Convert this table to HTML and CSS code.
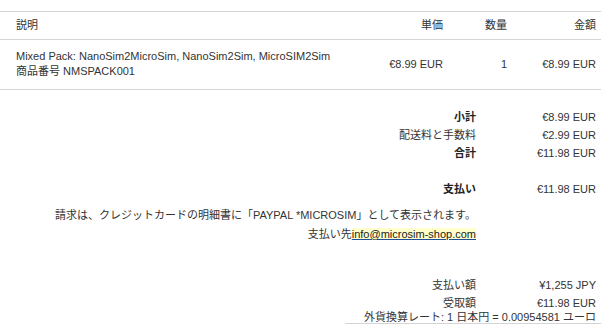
FILE: index.html
```html
<!DOCTYPE html>
<html lang="ja">
<head>
<meta charset="utf-8">
<link rel="stylesheet" href="styles.css">
</head>
<body>
<div class="invoice">
  <div class="items">
    <div class="row head">
      <div class="desc">説明</div>
      <div class="num">単価</div>
      <div class="num">数量</div>
      <div class="num amt">金額</div>
    </div>
    <div class="row item">
      <div class="desc">Mixed Pack: NanoSim2MicroSim, NanoSim2Sim, MicroSIM2Sim<br>商品番号 NMSPACK001</div>
      <div class="num">€8.99 EUR</div>
      <div class="num">1</div>
      <div class="num amt">€8.99 EUR</div>
    </div>
  </div>

  <div class="totals">
    <div class="lbl strong">小計</div><div class="val">€8.99 EUR</div>
    <div class="lbl">配送料と手数料</div><div class="val">€2.99 EUR</div>
    <div class="lbl strong">合計</div><div class="val">€11.98 EUR</div>
    <div class="lbl strong paid">支払い</div><div class="val paid">€11.98 EUR</div>
  </div>

  <div class="note">
    <div>請求は、クレジットカードの明細書に「PAYPAL *MICROSIM」として表示されます。</div>
    <div>支払い先<a class="mail" href="#">info@microsim-shop.com</a></div>
  </div>

  <div class="conv">
    <div class="lbl">支払い額</div><div class="val">¥1,255 JPY</div>
    <div class="lbl">受取額</div><div class="val">€11.98 EUR</div>
    <div class="rate">外貨換算レート: 1 日本円 = 0.00954581 ユーロ</div>
  </div>
</div>
</body>
</html>
```

FILE: styles.css
```css
html, body {
  margin: 0;
  padding: 0;
  background: #ffffff;
}

body {
  font-family: "Liberation Sans", Arial, "Noto Sans CJK JP", sans-serif;
  font-size: 11px;
  color: #333333;
}

.invoice {
  width: 601px;
  padding-top: 11px;
}

.items .row {
  display: grid;
  grid-template-columns: 1fr 90px 64px 94px;
  border-top: 1px solid #d4d4d4;
}

.items .row:last-child {
  border-bottom: 1px solid #d4d4d4;
}

.head {
  line-height: 27px;
}

.item {
  line-height: 15px;
  padding: 9px 0 10px;
  align-items: center;
}

.desc {
  padding-left: 16px;
}

.num {
  text-align: right;
}

.amt {
  padding-right: 5px;
}

.totals {
  display: grid;
  grid-template-columns: 1fr 120px;
  line-height: 18px;
  margin-top: 18px;
  padding-right: 5px;
}

.lbl {
  text-align: right;
  white-space: nowrap;
}

.val {
  text-align: right;
  white-space: nowrap;
}

.strong {
  font-weight: bold;
  color: #222222;
}

.paid {
  margin-top: 18px;
}

.note {
  width: 476px;
  text-align: right;
  line-height: 19px;
  margin-top: 8px;
  white-space: nowrap;
}

.mail {
  color: #1a1a1a;
  background: #ffffcc;
  text-decoration: underline;
  text-decoration-color: #1f4f9a;
}

.conv {
  display: grid;
  grid-template-columns: 1fr 120px;
  width: 251px;
  margin-left: auto;
  margin-top: 32px;
  padding-right: 5px;
  line-height: 18px;
  border-bottom: 1px solid #d4d4d4;
}

.rate {
  grid-column: 1 / -1;
  text-align: right;
  line-height: 11px;
  white-space: nowrap;
}
```
